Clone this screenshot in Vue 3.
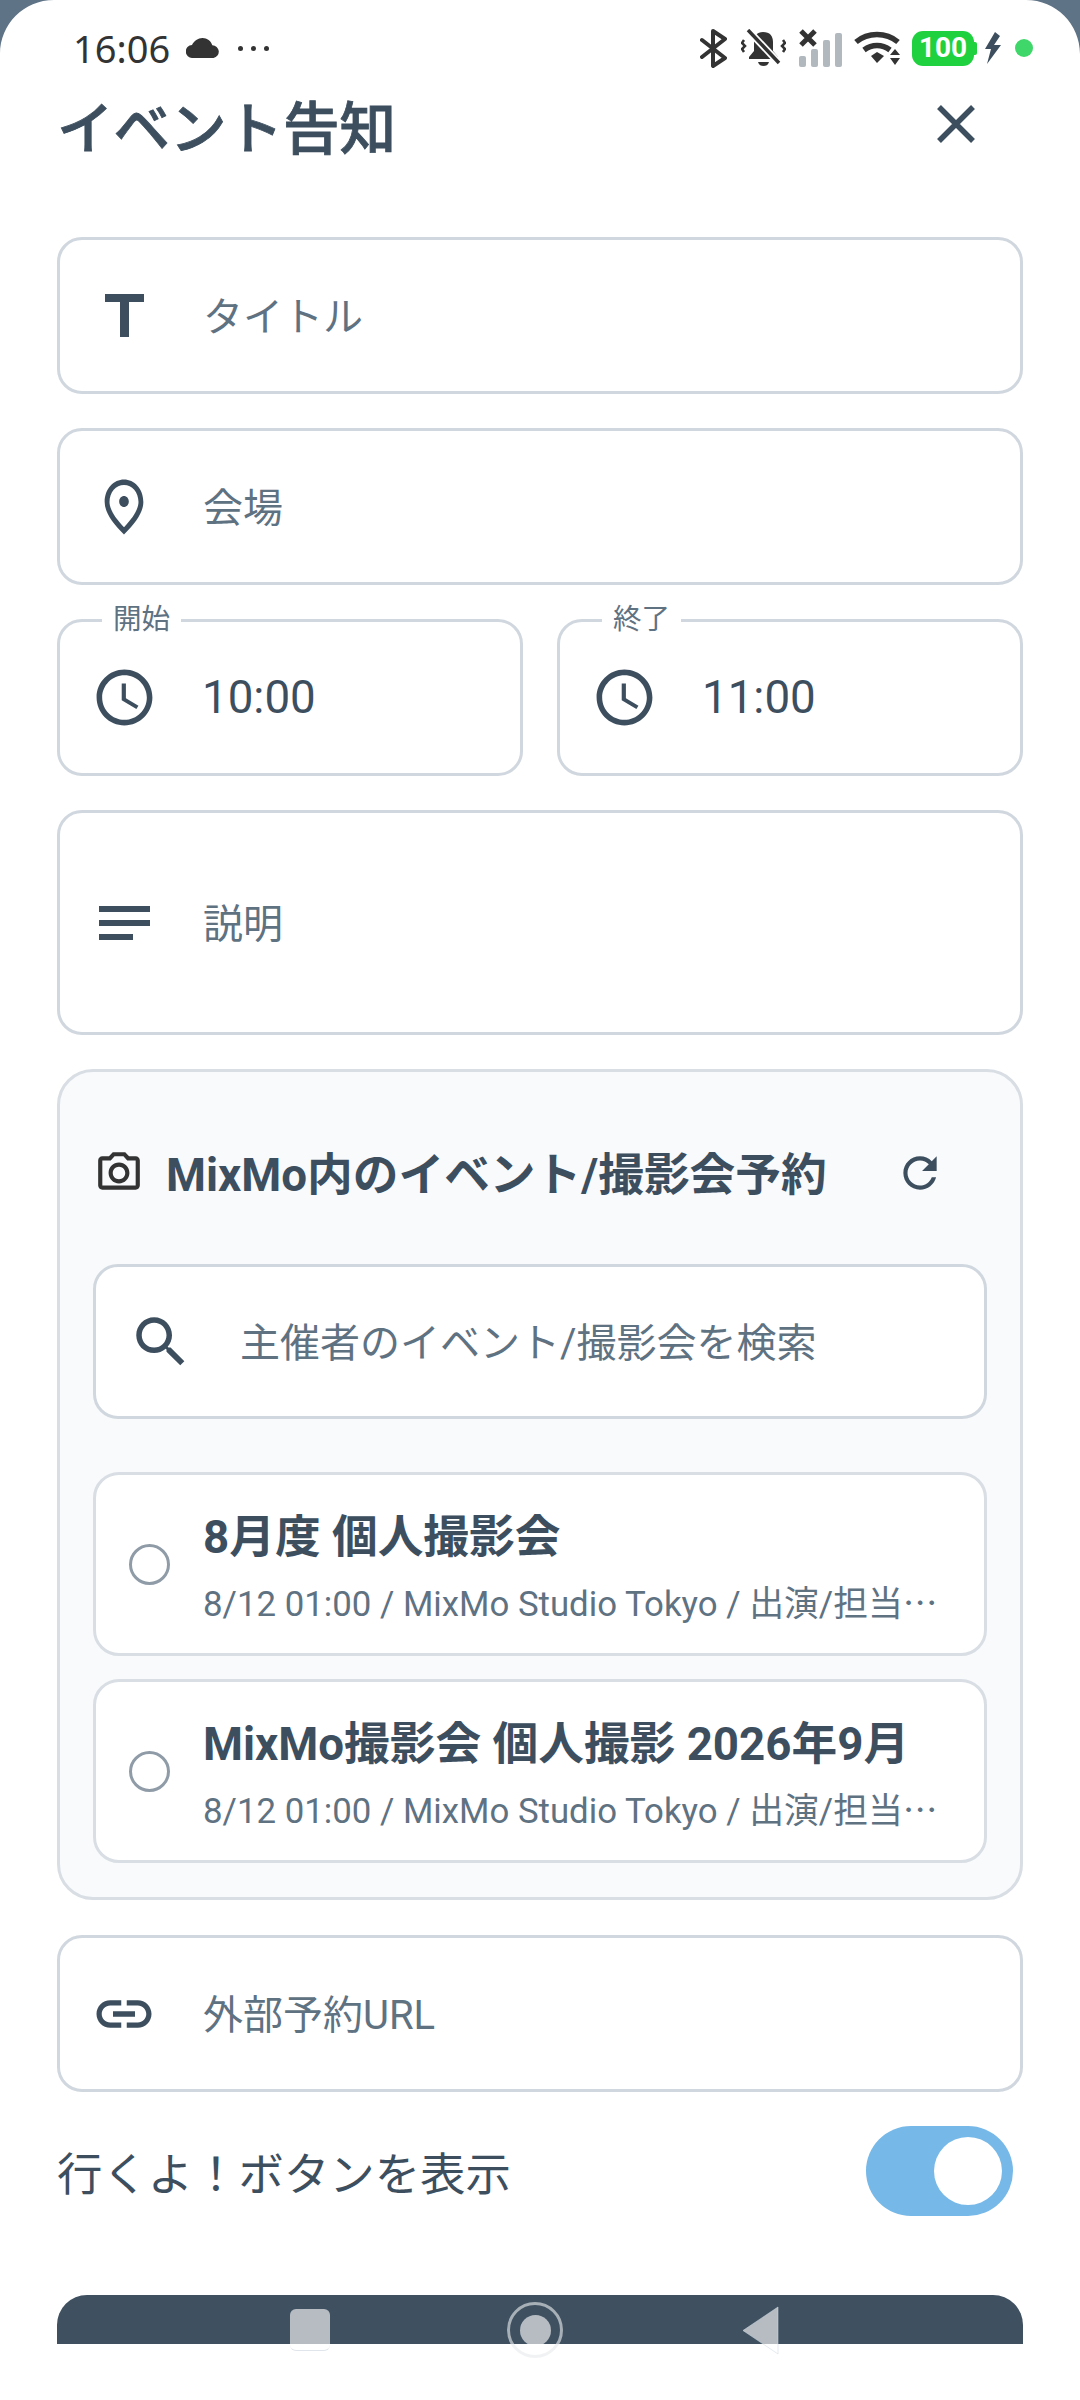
<template>
  <div class="screen">
    <svg class="corner corner-left" viewBox="0 0 54 54"><path d="M0 0h54C24 0 0 24 0 54z" /></svg>
    <svg class="corner corner-right" viewBox="0 0 54 54"><path d="M0 0h54v54C54 24 30 0 0 0z" /></svg>

    <div class="status">
      <div class="status-left">
        <span class="time">16:06</span>
        <svg class="cloud" width="34" height="20" viewBox="0 0 34 20"><path d="M6.500 20a6.500 6.500 0 0 1-.5-13C8 3 12 0 16.500 0c4.700 0 8.500 3 9.800 7.300A6.400 6.400 0 0 1 27.500 20z" /></svg>
        <span class="more"><i></i><i></i><i></i></span>
      </div>
      <div class="status-right">
        <svg width="27" height="39" viewBox="0 0 27 39" fill="none" stroke="#333" stroke-width="4" stroke-linecap="round" stroke-linejoin="round"><path d="M2 11l23 18-12 8V2l12 8L2 28" /></svg>
        <svg width="45" height="38" viewBox="0 0 45 38" fill="#333">
          <path d="M22 3c-6 0-9 4-9 10v9l-5 6v2h29v-2l-5-6v-9c0-6-3-10-10-10z" />
          <path d="M17 33h11c-1 3-3 4-5.500 4S18 36 17 33z" />
          <path d="M7 1l31 33" stroke="#fff" stroke-width="7" />
          <path d="M7 1l31 33" stroke="#333" stroke-width="3.500" />
          <path d="M3 11l-2 3 3 3-3 3 2 3M42 11l2 3-3 3 3 3-2 3" fill="none" stroke="#333" stroke-width="2.500" />
        </svg>
        <svg width="43" height="38" viewBox="0 0 43 38">
          <path d="M2 2l14 14M16 2L2 16" stroke="#333" stroke-width="5" />
          <rect x="0" y="27" width="7" height="11" rx="2" fill="#b1b8be" />
          <rect x="12" y="20" width="7" height="18" rx="2" fill="#b1b8be" />
          <rect x="24" y="11" width="7" height="27" rx="2" fill="#b1b8be" />
          <rect x="36" y="4" width="7" height="34" rx="2" fill="#b1b8be" />
        </svg>
        <svg width="48" height="34" viewBox="0 0 48 34" fill="none" stroke="#333" stroke-width="5.500">
          <path d="M2 11c12-10 30-10 42 0" />
          <path d="M10 19c8-6 18-6 26 0" />
          <path d="M17 25l6-4 7 4-7 7z" fill="#333" stroke="none" />
          <path d="M41 18l5 6H36zM41 34l5-7H36z" fill="#333" stroke="none" />
        </svg>
        <div class="battery"><span>100</span></div>
        <svg width="17" height="32" viewBox="0 0 17 32"><path d="M11 0L1 17h6L3 32l14-19h-7l6-9z" fill="#3d4f5f" /></svg>
        <span class="dot"></span>
      </div>
    </div>

    <div class="page">
      <div class="head">
        <h1>イベント告知</h1>
        <svg class="close" width="38" height="38" viewBox="0 0 38 38"><path d="M2 2l34 34M36 2L2 36" stroke="#3d4f5f" stroke-width="5.500" fill="none" /></svg>
      </div>

      <div class="field first">
        <span class="icon"><svg width="39" height="43" viewBox="0 0 39 43"><path d="M0 0h39v8H24v35h-9V8H0z" /></svg></span>
        <span class="placeholder">タイトル</span>
      </div>

      <div class="field">
        <span class="icon"><svg width="58" height="66" viewBox="0 0 24 24" preserveAspectRatio="none"><path d="M12 12c-1.100 0-2-.9-2-2s.9-2 2-2 2 .9 2 2-.9 2-2 2zm6-1.800C18 6.570 15.350 4 12 4s-6 2.570-6 6.200c0 2.340 1.950 5.440 6 9.140 4.050-3.700 6-6.800 6-9.140zM12 2c4.200 0 8 3.220 8 8.200 0 3.320-2.670 7.250-8 11.800-5.330-4.550-8-8.480-8-11.800C4 5.220 7.800 2 12 2z" /></svg></span>
        <span class="placeholder">会場</span>
      </div>

      <div class="times">
        <div v-for="t in times" :key="t.label" class="field time-field">
          <span class="float-label">{{ t.label }}</span>
          <span class="icon"><svg width="67" height="67" viewBox="0 0 24 24"><path d="M11.990 2C6.470 2 2 6.480 2 12s4.470 10 9.990 10C17.520 22 22 17.520 22 12S17.520 2 11.990 2zM12 20c-4.420 0-8-3.580-8-8s3.580-8 8-8 8 3.580 8 8-3.580 8-8 8zm.5-13H11v6l5.250 3.150.75-1.230-4.500-2.670z" /></svg></span>
          <span class="value">{{ t.value }}</span>
        </div>
      </div>

      <div class="field desc">
        <span class="icon"><svg width="51" height="34" viewBox="0 0 51 34"><path d="M0 0h51v6H0zM0 14h51v6H0zM0 28h34v6H0z" /></svg></span>
        <span class="placeholder">説明</span>
      </div>

      <section class="booking">
        <div class="booking-head">
          <svg class="camera" width="50" height="50" viewBox="0 0 24 24"><path d="M14.120 4l1.830 2H20v12H4V6h4.050l1.830-2h4.240M15 2H9L7.170 4H4c-1.100 0-2 .9-2 2v12c0 1.100.9 2 2 2h16c1.100 0 2-.9 2-2V6c0-1.100-.9-2-2-2h-3.170L15 2zm-3 7c1.650 0 3 1.350 3 3s-1.350 3-3 3-3-1.350-3-3 1.350-3 3-3m0-2c-2.760 0-5 2.240-5 5s2.240 5 5 5 5-2.240 5-5-2.240-5-5-5z" /></svg>
          <span class="booking-title">MixMo内のイベント/撮影会予約</span>
          <svg class="refresh" width="50" height="50" viewBox="0 0 24 24"><path d="M17.650 6.350C16.200 4.900 14.210 4 12 4c-4.420 0-7.990 3.580-7.990 8s3.570 8 7.990 8c3.730 0 6.840-2.550 7.730-6h-2.080c-.82 2.330-3.040 4-5.650 4-3.310 0-6-2.690-6-6s2.690-6 6-6c1.660 0 3.140.69 4.220 1.780L13 11h7V4l-2.350 2.350z" /></svg>
        </div>

        <div class="field search">
          <svg class="search-icon" width="66" height="66" viewBox="0 0 24 24"><path d="M15.500 14h-.79l-.28-.27C15.410 12.590 16 11.110 16 9.500 16 5.910 13.090 3 9.500 3S3 5.910 3 9.500 5.910 16 9.500 16c1.610 0 3.090-.59 4.230-1.570l.27.28v.79l5 4.990L20.490 19l-4.990-5zm-6 0C7.010 14 5 11.990 5 9.500S7.010 5 9.500 5 14 7.010 14 9.500 11.990 14 9.500 14z" /></svg>
          <span class="placeholder">主催者のイベント/撮影会を検索</span>
        </div>

        <div class="items">
          <div v-for="item in items" :key="item" class="item">
            <span class="radio"></span>
            <div class="item-text">
              <div class="item-title">{{ item }}</div>
              <div class="item-sub">8/12 01:00 / MixMo Studio Tokyo / 出演/担当<span class="ellipsis">…</span></div>
            </div>
          </div>
        </div>
      </section>

      <div class="field url">
        <span class="icon"><svg width="66" height="66" viewBox="0 0 24 24"><path d="M3.900 12c0-1.710 1.390-3.100 3.100-3.100h4V7H7c-2.760 0-5 2.240-5 5s2.240 5 5 5h4v-1.900H7c-1.710 0-3.100-1.390-3.100-3.100zM8 13h8v-2H8v2zm9-6h-4v1.900h4c1.710 0 3.100 1.390 3.100 3.100s-1.390 3.100-3.100 3.100h-4V17h4c2.760 0 5-2.240 5-5s-2.240-5-5-5z" /></svg></span>
        <span class="placeholder">外部予約URL</span>
      </div>

      <div class="toggle-row">
        <span class="toggle-label">行くよ！ボタンを表示</span>
        <span class="toggle"><span class="thumb"></span></span>
      </div>

      <div class="bottom-bar"></div>
    </div>

    <div class="nav">
      <span class="nav-square"></span>
      <span class="nav-home"><i></i></span>
      <svg class="nav-back" width="38" height="49" viewBox="0 0 38 49"><path d="M36 1L1 24.500 36 48z" fill="rgba(255,255,255,.62)" stroke="rgba(210,218,226,.55)" stroke-width="1" stroke-linejoin="round" /></svg>
    </div>
  </div>
</template>

<script setup>
const times = [
  { label: '開始', value: '10:00' },
  { label: '終了', value: '11:00' }
]

const items = ['8月度 個人撮影会', 'MixMo撮影会 個人撮影 2026年9月']
</script>

<style>
body {
  background: #fff;
}
</style>

<style scoped>
.screen {
  position: relative;
  width: 1080px;
  height: 2400px;
  overflow: hidden;
  background: #fff;
  font-family: Roboto, "Noto Sans CJK JP", sans-serif;
  color: #3d4f5f;
}

.corner {
  position: absolute;
  top: 0;
  width: 54px;
  height: 54px;
  fill: #5f7386;
}

.corner-left {
  left: 0;
}

.corner-right {
  right: 0;
}

.status {
  display: flex;
  justify-content: space-between;
  align-items: center;
  height: 96px;
  padding: 0 47px 0 73px;
  box-sizing: border-box;
}

.status-left {
  display: flex;
  align-items: center;
}

.time {
  font-family: "Noto Sans", sans-serif;
  font-size: 38px;
  color: #333;
}

.cloud {
  margin-left: 16px;
  fill: #333;
}

.more {
  display: flex;
  gap: 8px;
  margin-left: 18px;
}

.more i {
  width: 5px;
  height: 5px;
  border-radius: 50%;
  background: #333;
}

.status-right {
  display: flex;
  align-items: center;
}

.status-right > svg:nth-child(1) {
  margin-right: 14px;
}

.status-right > svg:nth-child(2) {
  margin-right: 13px;
}

.status-right > svg:nth-child(3) {
  margin-right: 12px;
}

.status-right > svg:nth-child(4) {
  margin-right: 10px;
}

.battery {
  position: relative;
  display: flex;
  align-items: center;
  justify-content: center;
  width: 62px;
  height: 35px;
  margin-right: 10px;
  border-radius: 11px;
  background: #1fd13f;
  color: #fff;
  font-size: 28px;
  font-weight: 700;
  line-height: 1;
}

.battery::after {
  content: "";
  position: absolute;
  right: -3px;
  top: 11px;
  width: 3px;
  height: 13px;
  border-radius: 0 2px 2px 0;
  background: #1fd13f;
}

.dot {
  width: 18px;
  height: 18px;
  margin-left: 14px;
  border-radius: 50%;
  background: #3fd76a;
}

.page {
  padding: 0 57px;
}

.head {
  display: flex;
  justify-content: space-between;
  align-items: flex-start;
  height: 60px;
  padding-right: 48px;
}

h1 {
  margin: 4px 0 0;
  font-size: 56.500px;
  font-weight: 500;
  line-height: 60px;
  -webkit-text-stroke: 0.8px #3d4f5f;
}

.close {
  margin-top: 9px;
}

.field {
  display: flex;
  align-items: center;
  box-sizing: border-box;
  height: 157px;
  margin-top: 34px;
  border: 3px solid #d0d7de;
  border-radius: 25px;
  background: #fff;
}

.first {
  margin-top: 81px;
}

.icon {
  display: flex;
  justify-content: center;
  align-items: center;
  flex: none;
  width: 84px;
  margin-left: 22px;
  margin-right: 37px;
  fill: #3d4f5f;
}

.placeholder {
  margin-top: 5px;
  font-size: 40px;
  line-height: 48px;
  color: #5f7282;
}

.times {
  display: flex;
  gap: 34px;
}

.time-field {
  position: relative;
  flex: 1;
}

.float-label {
  position: absolute;
  left: 42px;
  top: -20px;
  padding: 0 11px;
  background: #fff;
  font-size: 28.600px;
  line-height: 34px;
  color: #5f7282;
}

.value {
  margin-left: -1px;
  font-size: 45.700px;
  color: #3d4f5f;
}

.desc {
  height: 225px;
}

.booking {
  box-sizing: border-box;
  height: 831px;
  margin-top: 34px;
  padding: 59px 33px 0;
  border: 3px solid #d8dee4;
  border-radius: 36px;
  background: #f8fafc;
}

.booking-head {
  display: flex;
  align-items: center;
  height: 84px;
  margin-bottom: 49px;
}

.camera {
  flex: none;
  margin-left: 1px;
  fill: #333;
}

.booking-title {
  margin-left: 22px;
  margin-bottom: 4px;
  font-size: 45.700px;
  font-weight: 700;
  white-space: nowrap;
}

.refresh {
  flex: none;
  margin-left: 68px;
  fill: #3d4f5f;
}

.search {
  margin-top: 0;
  height: 155px;
}

.search-icon {
  flex: none;
  margin-left: 32px;
  margin-right: 46px;
  fill: #3d4f5f;
}

.items {
  display: flex;
  flex-direction: column;
  gap: 23px;
  margin-top: 53px;
}

.item {
  display: flex;
  align-items: center;
  box-sizing: border-box;
  height: 184px;
  padding-left: 33px;
  border: 3px solid #d8dee4;
  border-radius: 26px;
  background: #fff;
}

.radio {
  flex: none;
  box-sizing: border-box;
  width: 41px;
  height: 41px;
  border: 3.500px solid #8f9ca8;
  border-radius: 50%;
}

.item-text {
  margin-left: 33px;
  padding-top: 8px;
}

.item-title {
  font-size: 45.700px;
  font-weight: 700;
  line-height: 56px;
}

.item-sub {
  margin-top: 13px;
  font-size: 34.800px;
  line-height: 44px;
  color: #5f7282;
  white-space: nowrap;
}

.ellipsis {
  font-family: "Noto Sans CJK JP", sans-serif;
}

.url {
  height: 157px;
  margin-top: 35px;
}

.toggle-row {
  display: flex;
  justify-content: space-between;
  align-items: center;
  height: 90px;
  margin-top: 34px;
  padding-right: 10px;
}

.toggle-label {
  font-size: 45.400px;
  color: #3d4f5f;
}

.toggle {
  display: flex;
  align-items: center;
  justify-content: flex-end;
  box-sizing: border-box;
  width: 147px;
  height: 90px;
  padding-right: 11px;
  border-radius: 45px;
  background: #76b8e8;
}

.thumb {
  width: 68px;
  height: 68px;
  border-radius: 50%;
  background: #fff;
}

.bottom-bar {
  height: 49px;
  margin-top: 79px;
  border-radius: 30px 30px 0 0;
  background: #3f5060;
}

.nav span,
.nav svg {
  position: absolute;
}

.nav-square {
  left: 290px;
  top: 2309px;
  box-sizing: border-box;
  width: 40px;
  height: 42px;
  border-radius: 6px;
  background: rgba(255, 255, 255, 0.62);
  border-bottom: 1px solid rgba(210, 218, 226, 0.7);
}

.nav-home {
  left: 507px;
  top: 2302px;
  display: flex;
  justify-content: center;
  align-items: center;
  box-sizing: border-box;
  width: 56px;
  height: 56px;
  border: 3.500px solid rgba(230, 234, 238, 0.62);
  border-radius: 50%;
}

.nav-home i {
  width: 31px;
  height: 31px;
  border-radius: 50%;
  background: rgba(255, 255, 255, 0.62);
}

.nav-back {
  left: 742px;
  top: 2306px;
}
</style>
